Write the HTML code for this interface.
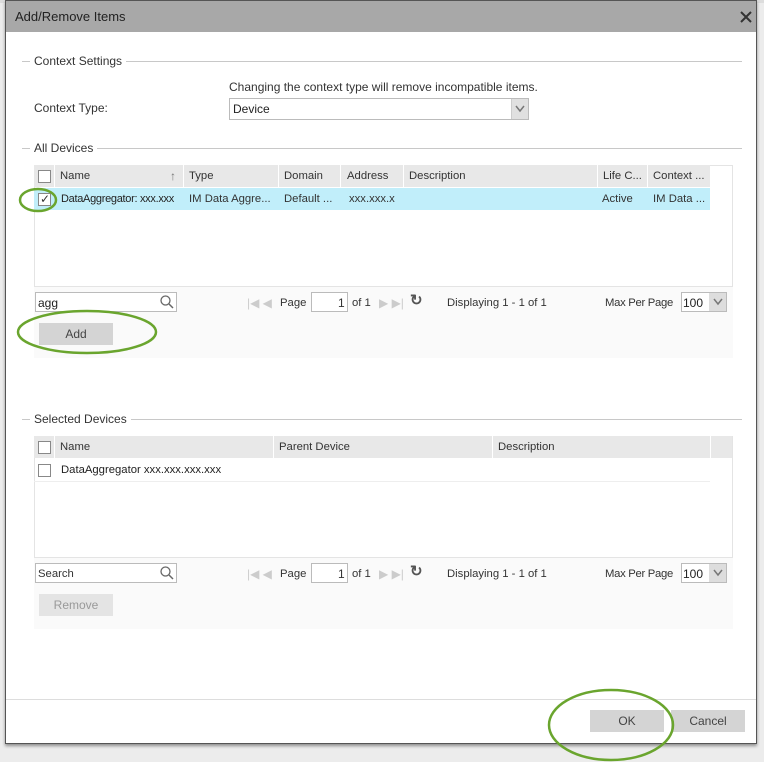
<!DOCTYPE html>
<html><head><style>
*{box-sizing:border-box;margin:0;padding:0}
body{width:764px;height:762px;overflow:hidden;background:#ececec;font-family:"Liberation Sans",sans-serif;font-size:12px;color:#333;position:relative}
.a{position:absolute}
.t{position:absolute;white-space:nowrap;line-height:14px}
.leg{position:absolute;left:22px;width:720px;height:1px;background:#c8c8c8}
.leg span{position:absolute;left:8px;top:-7px;background:#fff;padding:0 4px;font-size:12px;line-height:14px;color:#333}
.cb{position:absolute;width:13px;height:13px;border:1px solid #888;background:#fff}
.hdr{position:absolute;height:22px;background:#e8e8e8}
.sep{position:absolute;top:0;width:1px;height:22px;background:#fff}
.inp{position:absolute;border:1px solid #bbb;background:#fff;height:20px}
.btn{position:absolute;width:74px;height:22px;background:#d4d4d4;text-align:center;line-height:22px;color:#444}
.g{color:#ccc}
.s{font-size:11.3px}
</style></head><body>
<div class="a" style="left:0;top:0;width:764px;height:3px;background:#ddd"></div>
<div class="a" style="left:5px;top:0;width:752px;height:744px;background:#fff;border:1px solid #555;box-shadow:0 2px 3px rgba(0,0,0,.4)"></div>
<div class="a" style="left:6px;top:1px;width:750px;height:31px;background:#a8a8a8"></div>
<div class="t" style="left:15px;top:10px;font-size:13px;color:#222">Add/Remove Items</div>
<svg class="a" style="left:740px;top:11px" width="12" height="12"><path d="M1 1L11 11M11 1L1 11" stroke="#333" stroke-width="2"/></svg>

<div class="leg" style="top:61px"><span>Context Settings</span></div>
<div class="t" style="left:229px;top:80px">Changing the context type will remove incompatible items.</div>
<div class="t" style="left:34px;top:101px">Context Type:</div>
<div class="inp" style="left:229px;top:98px;width:300px;height:22px"></div>
<div class="t" style="left:233px;top:102px;color:#222">Device</div>
<div class="a" style="left:511px;top:99px;width:17px;height:20px;background:#e0e0e0;border-left:1px solid #ccc"></div>
<svg class="a" style="left:515px;top:105px" width="10" height="8"><path d="M1 1L5 6L9 1" fill="none" stroke="#777" stroke-width="1.5"/></svg>

<div class="leg" style="top:148px"><span>All Devices</span></div>
<div class="a" style="left:34px;top:165px;width:699px;height:193px;background:#fafafa"></div>
<div class="a" style="left:34px;top:165px;width:699px;height:122px;background:#fff;border:1px solid #e4e4e4"></div>
<div class="hdr" style="left:34px;top:165px;width:676px">
<div class="sep" style="left:20px"></div><div class="sep" style="left:149px"></div><div class="sep" style="left:244px"></div><div class="sep" style="left:306px"></div><div class="sep" style="left:369px"></div><div class="sep" style="left:563px"></div><div class="sep" style="left:613px"></div></div>
<div class="cb" style="left:38px;top:170px"></div>
<div class="t s" style="left:60px;top:169px">Name</div><div class="t" style="left:170px;top:169px;color:#777">↑</div>
<div class="t s" style="left:189px;top:169px">Type</div><div class="t s" style="left:284px;top:169px">Domain</div><div class="t s" style="left:347px;top:169px">Address</div><div class="t s" style="left:409px;top:169px">Description</div><div class="t s" style="left:603px;top:169px">Life C...</div><div class="t s" style="left:653px;top:169px">Context ...</div>
<div class="a" style="left:34px;top:188px;width:676px;height:22px;background:#c1eefa"></div>
<div class="cb" style="left:38px;top:193px"></div><div class="t" style="left:40px;top:192px;font-size:12px">✓</div>
<div class="t" style="left:61px;top:192px;color:#222;font-size:11px;letter-spacing:-0.3px">DataAggregator: xxx.xxx</div><div class="t s" style="left:189px;top:192px">IM Data Aggre...</div><div class="t s" style="left:284px;top:192px">Default ...</div><div class="t s" style="left:349px;top:192px">xxx.xxx.x</div><div class="t s" style="left:602px;top:192px">Active</div><div class="t s" style="left:653px;top:192px">IM Data ...</div>

<div class="inp" style="left:35px;top:292px;width:142px"></div>
<div class="t" style="left:38px;top:296px;color:#222">agg</div>
<svg class="a" style="left:159px;top:294px" width="16" height="16"><circle cx="6.5" cy="6.5" r="4.5" fill="none" stroke="#666" stroke-width="1.3"/><path d="M10 10L14 14" stroke="#666" stroke-width="1.5"/></svg>
<div class="t g" style="left:247px;top:296px">|◀ ◀</div>
<div class="t s" style="left:280px;top:296px">Page</div>
<div class="inp" style="left:311px;top:292px;width:37px"></div><div class="t" style="left:338px;top:296px">1</div>
<div class="t s" style="left:352px;top:296px">of 1</div>
<div class="t g" style="left:379px;top:296px">▶ ▶|</div>
<div class="t" style="left:410px;top:294px;font-size:15px;font-weight:bold;color:#555">↻</div>
<div class="t s" style="left:447px;top:296px">Displaying 1 - 1 of 1</div>
<div class="t s" style="left:605px;top:296px;letter-spacing:-0.3px">Max Per Page</div>
<div class="inp" style="left:681px;top:292px;width:46px"></div><div class="t" style="left:683px;top:296px;color:#222">100</div>
<div class="a" style="left:709px;top:293px;width:17px;height:18px;background:#ddd"></div>
<svg class="a" style="left:713px;top:298px" width="10" height="8"><path d="M1 1L5 6L9 1" fill="none" stroke="#777" stroke-width="1.5"/></svg>
<div class="btn" style="left:39px;top:323px">Add</div>

<div class="leg" style="top:419px"><span>Selected Devices</span></div>
<div class="a" style="left:34px;top:436px;width:699px;height:193px;background:#fafafa"></div>
<div class="a" style="left:34px;top:436px;width:699px;height:122px;background:#fff;border:1px solid #e4e4e4"></div>
<div class="hdr" style="left:34px;top:436px;width:698px"><div class="sep" style="left:20px"></div><div class="sep" style="left:239px"></div><div class="sep" style="left:458px"></div><div class="sep" style="left:676px"></div></div>
<div class="cb" style="left:38px;top:441px"></div>
<div class="t s" style="left:60px;top:440px">Name</div><div class="t s" style="left:279px;top:440px">Parent Device</div><div class="t s" style="left:498px;top:440px">Description</div>
<div class="cb" style="left:38px;top:464px"></div>
<div class="t s" style="left:61px;top:463px;color:#222">DataAggregator xxx.xxx.xxx.xxx</div>
<div class="a" style="left:34px;top:481px;width:676px;height:1px;background:#eee"></div>

<div class="inp" style="left:35px;top:563px;width:142px"></div>
<div class="t s" style="left:38px;top:567px;color:#333">Search</div>
<svg class="a" style="left:159px;top:565px" width="16" height="16"><circle cx="6.5" cy="6.5" r="4.5" fill="none" stroke="#666" stroke-width="1.3"/><path d="M10 10L14 14" stroke="#666" stroke-width="1.5"/></svg>
<div class="t g" style="left:247px;top:567px">|◀ ◀</div>
<div class="t s" style="left:280px;top:567px">Page</div>
<div class="inp" style="left:311px;top:563px;width:37px"></div><div class="t" style="left:338px;top:567px">1</div>
<div class="t s" style="left:352px;top:567px">of 1</div>
<div class="t g" style="left:379px;top:567px">▶ ▶|</div>
<div class="t" style="left:410px;top:565px;font-size:15px;font-weight:bold;color:#555">↻</div>
<div class="t s" style="left:447px;top:567px">Displaying 1 - 1 of 1</div>
<div class="t s" style="left:605px;top:567px;letter-spacing:-0.3px">Max Per Page</div>
<div class="inp" style="left:681px;top:563px;width:46px"></div><div class="t" style="left:683px;top:567px;color:#222">100</div>
<div class="a" style="left:709px;top:564px;width:17px;height:18px;background:#ddd"></div>
<svg class="a" style="left:713px;top:569px" width="10" height="8"><path d="M1 1L5 6L9 1" fill="none" stroke="#777" stroke-width="1.5"/></svg>
<div class="btn" style="left:39px;top:594px;background:#e4e4e4;color:#999">Remove</div>

<div class="a" style="left:6px;top:699px;width:750px;height:1px;background:#ddd"></div>
<div class="btn" style="left:590px;top:710px">OK</div>
<div class="btn" style="left:671px;top:710px">Cancel</div>

<svg class="a" style="left:0;top:0" width="764" height="762">
<g fill="none" stroke="#6aa52e" stroke-width="2.5">
<ellipse cx="38" cy="200" rx="18" ry="11"/>
<ellipse cx="87" cy="332" rx="69" ry="21"/>
<ellipse cx="611" cy="725" rx="62" ry="35"/>
</g></svg>
</body></html>
